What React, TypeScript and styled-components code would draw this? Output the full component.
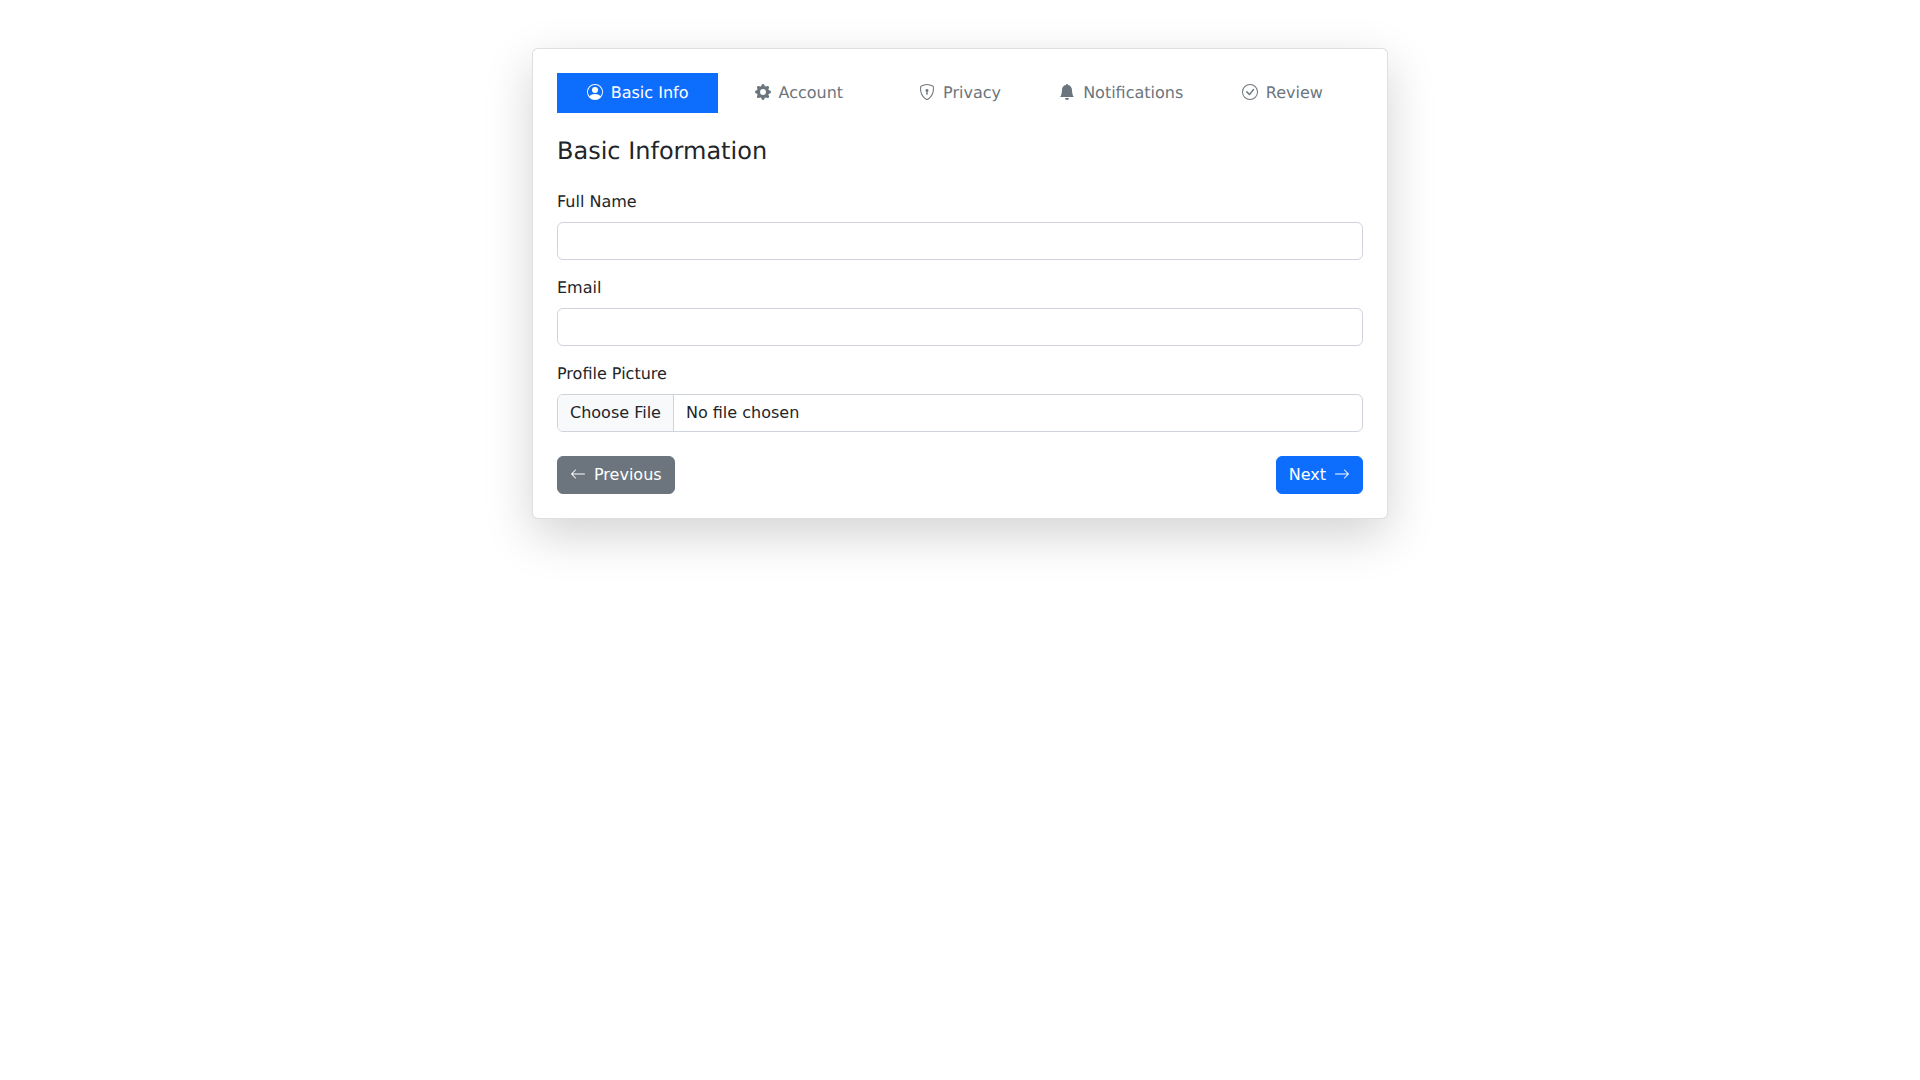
import React from 'react';
import styled, { createGlobalStyle } from 'styled-components';
import {
  BsArrowLeft,
  BsArrowRight,
  BsBellFill,
  BsCheckCircle,
  BsGearFill,
  BsPersonCircle,
  BsShieldLock,
} from 'react-icons/bs';

const GlobalStyle = createGlobalStyle`
  * {
    box-sizing: border-box;
  }

  html,
  body,
  #root {
    min-height: 100vh;
  }

  body {
    margin: 0;
    background: #fff;
    color: #212529;
    font-family: "DejaVu Sans", sans-serif;
    font-size: 16px;
    line-height: 1.5;
    text-rendering: geometricPrecision;
  }

  svg {
    vertical-align: -0.125em;
  }
`;

const Page = styled.div`
  width: 856px;
  margin: 0 auto;
  padding-top: 48px;
`;

const Card = styled.div`
  background: #fff;
  border: 1px solid rgba(0, 0, 0, 0.125);
  border-radius: 6px;
  box-shadow: 0 16px 48px rgba(0, 0, 0, 0.175);
  padding: 24px;
`;

const Tabs = styled.nav`
  display: flex;
  margin-bottom: 24px;
`;

const Tab = styled.a<{ $active?: boolean }>`
  flex: 1 1 0;
  padding: 8px 16px;
  text-align: center;
  background: ${p => (p.$active ? '#0d6efd' : 'transparent')};
  color: ${p => (p.$active ? '#fff' : '#6c757d')};

  svg {
    margin-right: 8px;
  }
`;

const Title = styled.h4`
  margin: 0 0 24px;
  font-size: 24px;
  font-weight: 500;
  line-height: 1.2;
`;

const Field = styled.div`
  margin-bottom: 16px;
`;

const Label = styled.label`
  display: block;
  margin-bottom: 8px;
`;

const TextInput = styled.input`
  display: block;
  width: 100%;
  height: 38px;
  padding: 6px 12px;
  font: inherit;
  color: #212529;
  background: #fff;
  border: 1px solid #ced4da;
  border-radius: 6px;
`;

const FileInput = styled(TextInput)`
  overflow: hidden;

  &::file-selector-button {
    height: 36px;
    margin: -6px 12px -6px -12px;
    padding: 6px 12px;
    font: inherit;
    color: #212529;
    background: #f8f9fa;
    border: 0 solid #ced4da;
    border-right-width: 1px;
    border-radius: 0;
  }
`;

const Actions = styled.div`
  display: flex;
  justify-content: space-between;
  margin-top: 24px;
`;

const Button = styled.button<{ $variant: 'primary' | 'secondary' }>`
  height: 38px;
  padding: 6px 12px;
  font: inherit;
  color: #fff;
  background: ${p => (p.$variant === 'primary' ? '#0d6efd' : '#6c757d')};
  border: 1px solid ${p => (p.$variant === 'primary' ? '#0d6efd' : '#6c757d')};
  border-radius: 6px;
`;

const IconBefore = styled(BsArrowLeft)`
  margin-right: 8px;
`;

const IconAfter = styled(BsArrowRight)`
  margin-left: 8px;
`;

const steps = [
  { label: 'Basic Info', icon: BsPersonCircle, active: true },
  { label: 'Account', icon: BsGearFill },
  { label: 'Privacy', icon: BsShieldLock },
  { label: 'Notifications', icon: BsBellFill },
  { label: 'Review', icon: BsCheckCircle },
];

const App: React.FC = () => {
  return (
    <Page>
      <GlobalStyle />
      <Card>
        <Tabs>
          {steps.map(({ label, icon: Icon, active }) => (
            <Tab key={label} $active={active}>
              <Icon size={16} />
              {label}
            </Tab>
          ))}
        </Tabs>

        <Title>Basic Information</Title>

        <Field>
          <Label htmlFor="fullName">Full Name</Label>
          <TextInput id="fullName" type="text" />
        </Field>
        <Field>
          <Label htmlFor="email">Email</Label>
          <TextInput id="email" type="email" />
        </Field>
        <Field>
          <Label htmlFor="picture">Profile Picture</Label>
          <FileInput id="picture" type="file" />
        </Field>

        <Actions>
          <Button $variant="secondary">
            <IconBefore size={16} />
            Previous
          </Button>
          <Button $variant="primary">
            Next
            <IconAfter size={16} />
          </Button>
        </Actions>
      </Card>
    </Page>
  );
};

export default App;
